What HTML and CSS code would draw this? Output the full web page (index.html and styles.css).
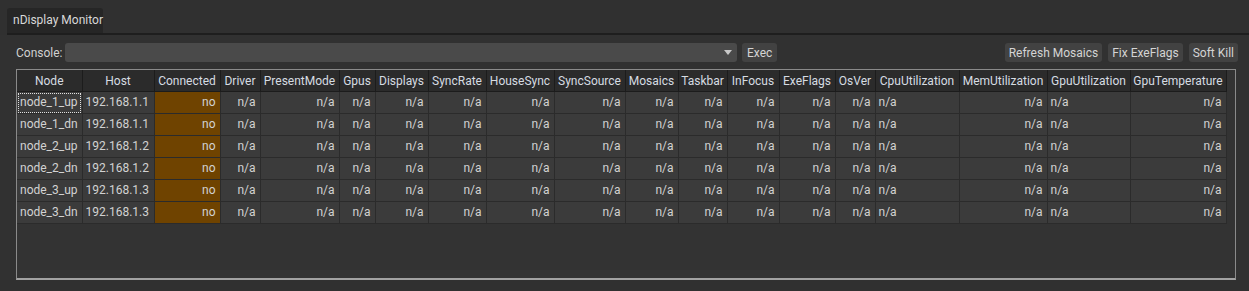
FILE: index.html
```html
<!DOCTYPE html>
<html lang="en">
<head>
    <meta charset="UTF-8">
    <title>nDisplay Monitor</title>
    <link rel="stylesheet" href="styles.css">
</head>
<body>

<div class="tabbar">
    <div class="tab">nDisplay Monitor</div>
</div>
<div class="tabline"></div>

<main class="panel">
    <div class="toolbar">
        <span class="label">Console:</span>
        <div class="combo"><span class="arrow"></span></div>
        <button class="btn exec">Exec</button>
        <div class="spacer"></div>
        <button class="btn">Refresh Mosaics</button>
        <button class="btn">Fix ExeFlags</button>
        <button class="btn">Soft Kill</button>
    </div>

    <div class="grid-frame">
        <table class="grid">
            <colgroup>
                <col style="width:65px"><col style="width:72px"><col style="width:66px"><col style="width:40px">
                <col style="width:79px"><col style="width:36px"><col style="width:53px"><col style="width:58px">
                <col style="width:68px"><col style="width:71px"><col style="width:53px"><col style="width:49px">
                <col style="width:52px"><col style="width:56px"><col style="width:40px"><col style="width:84px">
                <col style="width:88px"><col style="width:83px"><col style="width:96px">
            </colgroup>
            <thead>
                <tr>
                    <th>Node</th><th>Host</th><th>Connected</th><th>Driver</th><th>PresentMode</th>
                    <th>Gpus</th><th>Displays</th><th>SyncRate</th><th>HouseSync</th><th>SyncSource</th>
                    <th>Mosaics</th><th>Taskbar</th><th>InFocus</th><th>ExeFlags</th><th>OsVer</th>
                    <th>CpuUtilization</th><th>MemUtilization</th><th>GpuUtilization</th><th>GpuTemperature</th>
                </tr>
            </thead>
            <tbody id="rows"></tbody>
        </table>
    </div>
</main>

<script>
    const nodes = [
        ['node_1_up', '192.168.1.1'],
        ['node_1_dn', '192.168.1.1'],
        ['node_2_up', '192.168.1.2'],
        ['node_2_dn', '192.168.1.2'],
        ['node_3_up', '192.168.1.3'],
        ['node_3_dn', '192.168.1.3']
    ];
    // columns after Connected; 'l' = left aligned
    const rest = ['r','r','r','r','r','r','r','r','r','r','r','r','l','r','l','r'];

    const tbody = document.getElementById('rows');
    nodes.forEach((n, i) => {
        const tr = document.createElement('tr');
        let html = `<td class="left${i === 0 ? ' focus' : ''}">${n[0]}</td>`;
        html += `<td class="left">${n[1]}</td>`;
        html += `<td class="conn">no</td>`;
        rest.forEach(a => {
            html += `<td class="${a === 'l' ? 'left' : ''}">n/a</td>`;
        });
        tr.innerHTML = html;
        tbody.appendChild(tr);
    });
</script>

</body>
</html>
```
FILE: styles.css
```css
body {
    margin: 0;
    background: #303030;
    color: #d2d2d2;
    font-family: Roboto, 'Liberation Sans', sans-serif;
    font-size: 12px;
    height: 291px;
    overflow: hidden;
}

.tabbar {
    height: 25px;
    padding: 8px 0 0 7px;
    background: #303030;
}

.tab {
    display: inline-block;
    width: 96px;
    height: 25px;
    line-height: 24px;
    box-sizing: border-box;
    padding-left: 6px;
    background: #262626;
    border-radius: 3px 3px 0 0;
    color: #d8d8d8;
}

.tabline {
    height: 2px;
    margin-left: 7px;
    background: #1e1e1e;
}

.panel {
    padding: 8px 11px 0 16px;
    background: #313131;
}

.toolbar {
    display: flex;
    align-items: center;
    height: 19px;
}

.label {
    width: 49px;
    color: #d0d0d0;
}

.combo {
    position: relative;
    width: 672px;
    height: 19px;
    background: #4a4a4a;
    border-radius: 3px;
}

.arrow {
    position: absolute;
    right: 5px;
    top: 7px;
    width: 0;
    height: 0;
    border-left: 4px solid transparent;
    border-right: 4px solid transparent;
    border-top: 5px solid #c8c8c8;
}

.btn {
    height: 19px;
    margin-left: 6px;
    padding: 0 4px;
    border: none;
    border-radius: 3px;
    background: #424242;
    color: #d4d4d4;
    font-family: inherit;
    font-size: 12px;
}

.btn.exec {
    margin-left: 5px;
    padding: 0 5px;
}

.spacer {
    flex: 1;
}

.grid-frame {
    margin-top: 7px;
    width: 1218px;
    height: 208px;
    border: 1px solid #8a8a8a;
    border-bottom: 2px solid #a2a2a2;
    background: #333333;
}

.grid {
    table-layout: fixed;
    width: 1209px;
    border-collapse: collapse;
}

.grid th {
    height: 21px;
    padding: 0;
    background: #2b2b2b;
    border-right: 1px solid #1c1c1c;
    border-bottom: 1px solid #1c1c1c;
    color: #d6dce2;
    font-weight: normal;
    text-align: center;
    white-space: nowrap;
    overflow: hidden;
}

.grid td {
    height: 22px;
    padding: 2px 4px 0 3px;
    box-sizing: border-box;
    vertical-align: top;
    line-height: 17px;
    background: #3b3b3b;
    border-right: 1px solid #2b2b2b;
    border-bottom: 1px solid #2b2b2b;
    text-align: right;
    white-space: nowrap;
    overflow: hidden;
}

.grid td.left {
    text-align: left;
}

.grid td.conn {
    background: #6f4300;
}

.grid td.focus {
    outline: 1px dotted #e0e0e0;
    outline-offset: -2px;
}
```
